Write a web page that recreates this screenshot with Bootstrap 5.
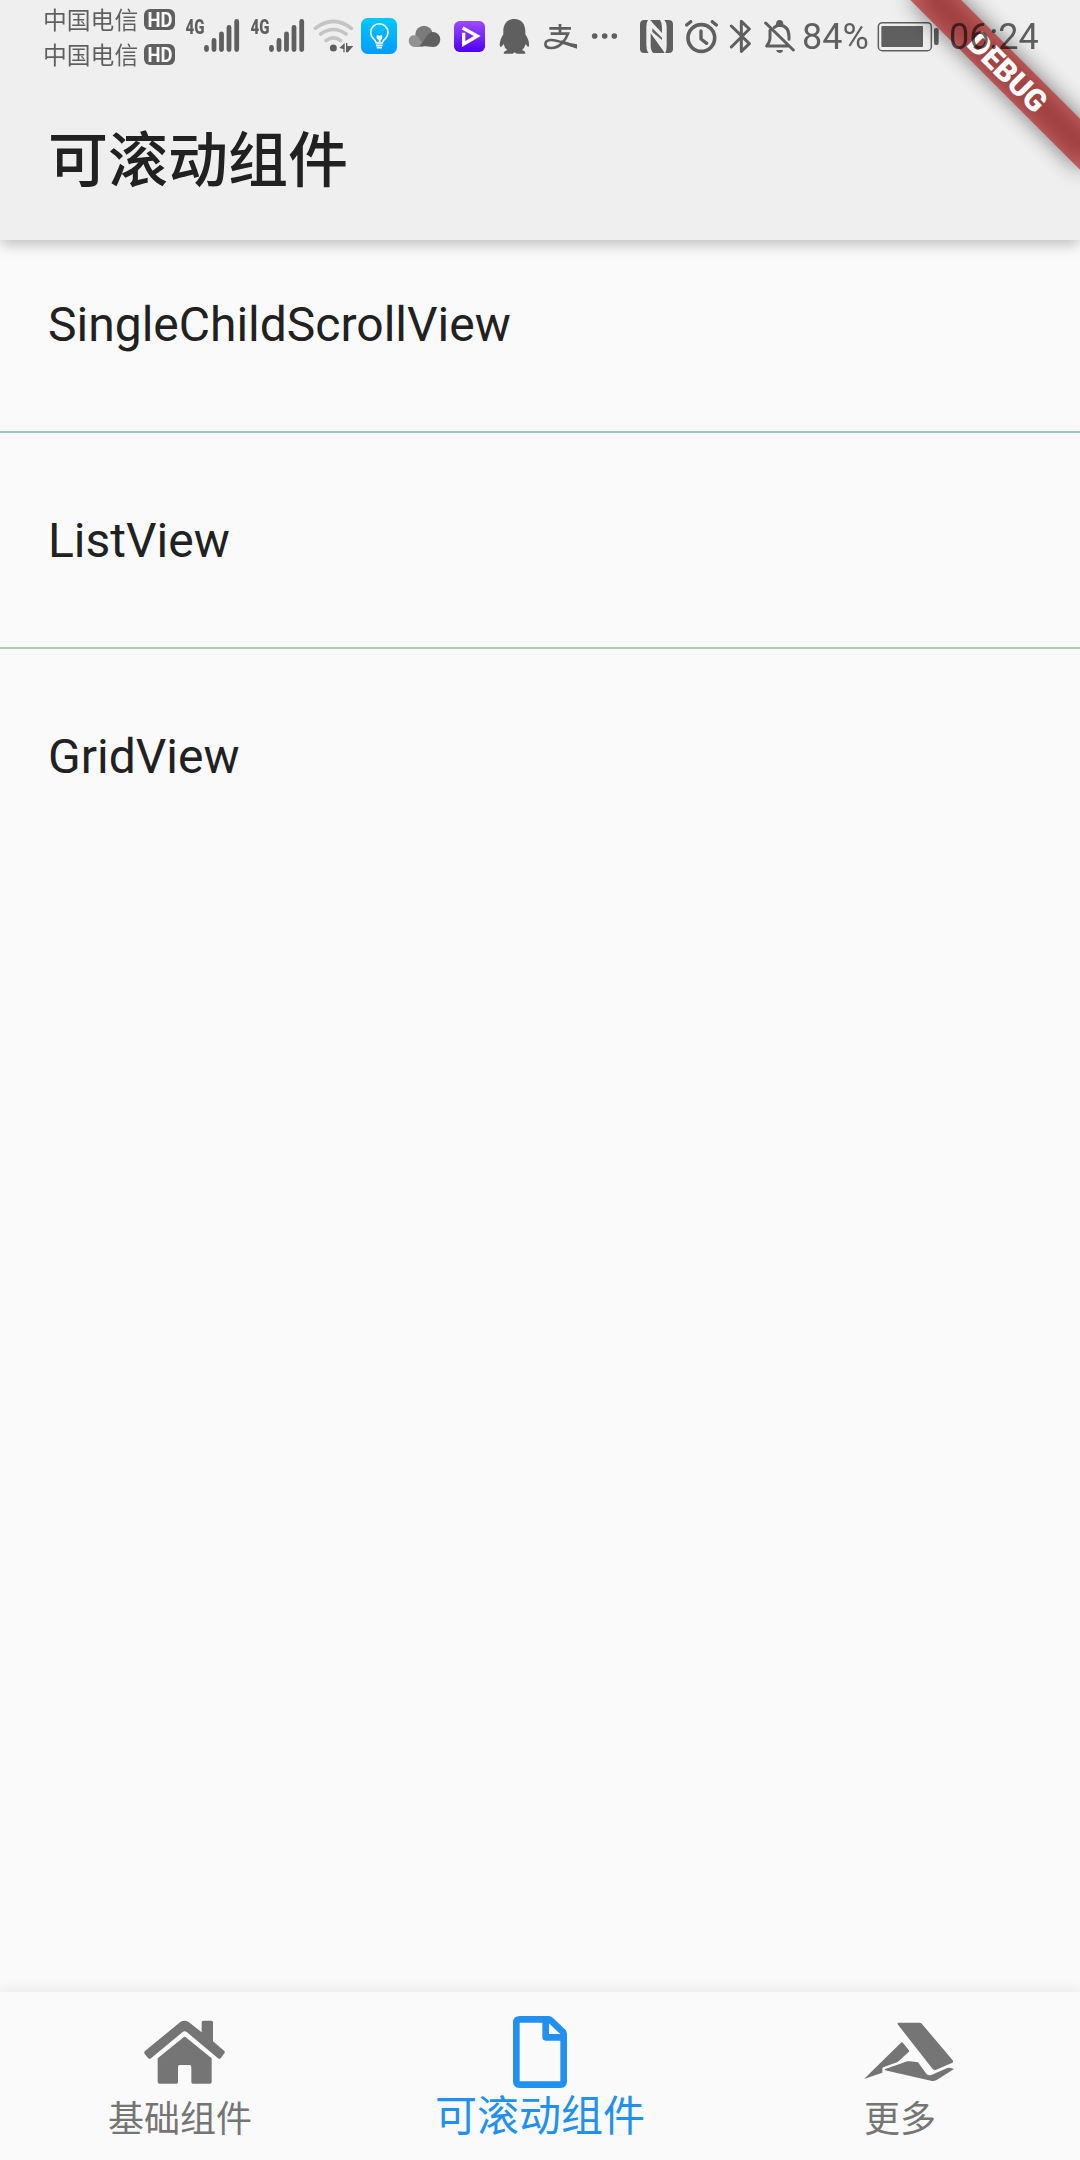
<!DOCTYPE html>
<html lang="zh-CN">
<head>
<meta charset="utf-8">
<meta name="viewport" content="width=device-width, initial-scale=1">
<title>可滚动组件</title>
<link href="https://cdn.jsdelivr.net/npm/bootstrap@5.3.0/dist/css/bootstrap.min.css" rel="stylesheet">
<style>
body { font-family: Roboto, "Noto Sans CJK SC", sans-serif; background: #fafafa; color: #212121; }
.app-screen { height: 2160px; }
.app-header { height: 240px; background: #efefef; box-shadow: 0 6px 12px -3px rgba(0,0,0,.14), 0 9px 15px rgba(0,0,0,.05), 0 3px 15px rgba(0,0,0,.08); z-index: 2; }
.debug-ribbon { width: 240px; height: 240px; }
.status-strip { height: 72px; padding-left: 43px; }
.status-strip svg { flex: none; height: 72px; }
.ink { opacity: .6; }
.carriers { width: 101px; height: 72px; font-size: 23.8px; color: #000; }
.carriers div { height: 35px; line-height: 35px; }
.status-num { font-size: 36px; line-height: 74px; color: #000; }
.pct { width: 75px; }
.app-title { font-size: 60px; font-weight: 500; height: 168px; line-height: 180px; padding-left: 48px; }
.tile { height: 168px; line-height: 170px; font-size: 48px; padding: 0 48px; }
.rule { height: 2px; margin: 23px 0; }
.rule-blue { background: #9bc4dc; }
.rule-green { background: #accdb0; }
.tab-strip { height: 168px; box-shadow: 0 -3px 12px rgba(0,0,0,.07); background: #fafafa; }
.tab-item { padding-top: 18px; color: #757575; font-size: 36px; text-decoration: none; }
.tab-item svg { width: 120px; height: 90px; }
.tab-item span { line-height: 40px; white-space: nowrap; }
.tab-item.current { color: #2190f0; font-size: 42px; }
.tab-item.current span { line-height: 34px; }
</style>
<script src="https://cdn.jsdelivr.net/npm/bootstrap@5.3.0/dist/js/bootstrap.bundle.min.js"></script>
</head>
<body>
<div class="app-screen d-flex flex-column overflow-hidden">
  <header class="app-header position-relative flex-shrink-0">
    <svg class="debug-ribbon position-absolute top-0 end-0" viewBox="-240 0 240 240">
      <defs><filter id="soft" x="-50%" y="-200%" width="200%" height="500%"><feGaussianBlur stdDeviation="11"/></filter></defs>
      <g transform="rotate(45)">
        <rect x="-120" y="84" width="240" height="36" fill="#000" fill-opacity=".5" filter="url(#soft)"/>
        <rect x="-120" y="84" width="240" height="36" fill="#b71c1c" fill-opacity=".627"/>
        <text x="0" y="113" text-anchor="middle" font-size="30.6" font-weight="900" fill="#fff">DEBUG</text>
      </g>
    </svg>
    <div class="status-strip d-flex position-relative">
      <div class="carriers ink flex-shrink-0"><div class="mt-1">中国电信</div><div>中国电信</div></div>
      <svg class="ink" width="36" viewBox="144 0 36 72">
        <rect x="144" y="9" width="31" height="21" rx="6"/><rect x="144" y="44" width="31" height="21" rx="6"/>
        <g fill="#fff" font-size="20" font-weight="700"><text x="147.500" y="26.700" textLength="25" lengthAdjust="spacingAndGlyphs">HD</text><text x="147.500" y="61.700" textLength="25" lengthAdjust="spacingAndGlyphs">HD</text></g>
      </svg>
      <svg class="ink" width="65" viewBox="180 0 65 72">
        <text x="185.500" y="33.700" font-size="21" font-weight="900" textLength="19" lengthAdjust="spacingAndGlyphs">4G</text>
        <path stroke="#000" stroke-width="4.800" stroke-linecap="round" d="M206.500 47.500v2M214 40.500v9M221.500 34v15.500M229 27.500v22M236.700 21.500v28"/>
      </svg>
      <svg class="ink" width="65" viewBox="180 0 65 72">
        <text x="185.500" y="33.700" font-size="21" font-weight="900" textLength="19" lengthAdjust="spacingAndGlyphs">4G</text>
        <path stroke="#000" stroke-width="4.800" stroke-linecap="round" d="M206.500 47.500v2M214 40.500v9M221.500 34v15.500M229 27.500v22M236.700 21.500v28"/>
      </svg>
      <svg width="48" viewBox="30 0 144 216">
        <g fill="none" stroke="#c4c4c4" stroke-width="11" stroke-linecap="round"><path d="M46 85Q100 43 154 85"/><path d="M62 102Q100 75 138 102"/><path d="M78 122Q100 105 122 122"/></g>
        <g fill="#606060"><circle cx="100" cy="144" r="10.500"/><path d="M118 144L134 129V157H130V147ZM138 129H142V138H160L144 157H138Z"/></g>
      </svg>
      <svg width="46" viewBox="174 0 138 216">
        <defs><linearGradient id="sky" x2="0" y2="1"><stop stop-color="#00c8ff"/><stop offset="1" stop-color="#009cff"/></linearGradient><linearGradient id="violet" x2="0" y2="1"><stop stop-color="#9a4cff"/><stop offset="1" stop-color="#5000f5"/></linearGradient></defs>
        <rect x="183" y="54" width="108" height="108" rx="20" fill="url(#sky)"/>
        <path d="M229 129Q227 121 220 116A26 26 0 1 1 256 116Q249 121 247 129ZM228 136h20M230 143h16" fill="none" stroke="#fff" stroke-width="5"/>
        <path d="M236 127V120A9 9 0 0 1 232 105Q238 109 244 105A9 9 0 0 1 242 120V127Z" fill="#fff"/>
      </svg>
      <svg width="44" viewBox="312 0 132 216">
        <circle cx="372" cy="103" r="26" fill="#7b7b7b"/><path d="M340 106Q352 104 359 118Q365 130 371 141H345Q327 140 326 123Q327 108 340 106Z" fill="#929292"/>
        <path d="M358 137Q370 125 377 113Q386 96 400 96Q420 99 421 119Q418 139 400 141Z" fill="#606060"/>
      </svg>
      <svg width="45" viewBox="444 0 135 216">
        <rect x="462" y="63" width="93" height="93" rx="17" fill="url(#violet)"/>
        <path d="M491 98V132L532 108L488 84" fill="none" stroke="#fff" stroke-width="10"/>
      </svg>
      <svg class="ink" width="46" viewBox="579 0 138 216">
        <path d="M643 57C620 57 610 73 610 94V103Q599 120 599 136Q602 147 611 132Q613 144 622 150Q611 154 611 161H638L644 157L650 161H676Q677 154 666 150Q674 144 677 132Q686 147 687 136Q688 121 676 103V94C676 73 665 57 643 57Z"/>
      </svg>
      <svg class="ink" width="44" viewBox="717 0 132 216">
        <path d="M748 85H813M780 72V101M752 101H804C798 119 779 145 752 144C730 143 732 121 752 120C772 119 795 132 831 140" fill="none" stroke="#000" stroke-width="8"/><path d="M784 121Q810 130 831 133V146Q809 140 784 127Z"/>
      </svg>
      <svg class="ink" width="54" viewBox="849 0 162 216"><circle cx="884" cy="108" r="8.500"/><circle cx="914" cy="108" r="8.500"/><circle cx="943" cy="108" r="8.500"/></svg>
      <svg class="ink" width="43" viewBox="51 0 129 216">
        <path d="M73 60H84Q79 67 79 82V135Q79 150 85 159H73Q60 159 60 146V73Q60 60 73 60ZM146 60Q159 60 159 73V146Q159 159 146 159H136Q140 150 140 137V80Q140 67 133 60Z"/>
        <path d="M90 60H120Q126 68 126 82V99L98 69Q94 62 90 60ZM97 85L126 113V120L97 96ZM92 100L134 158L130 159H100Q92 152 92 138Z"/>
      </svg>
      <svg class="ink" width="45" viewBox="180 0 135 216">
        <circle cx="244" cy="114" r="40" fill="none" stroke="#000" stroke-width="11"/>
        <path d="M243 93V117L260 130M200 75L212 65M277 65L289 75" fill="none" stroke="#000" stroke-width="10" stroke-linecap="round" stroke-linejoin="round"/>
      </svg>
      <svg class="ink" width="34" viewBox="315 0 102 216"><path d="M334 78L388 131L364 154V64L388 87L334 141" fill="none" stroke="#000" stroke-width="9" stroke-linecap="round" stroke-linejoin="round"/></svg>
      <svg class="ink" width="43" viewBox="417 0 129 216">
        <path d="M437 69L520 150M450 91V114Q450 124 440 138H503M463 82Q470 76 479 76Q507 78 507 110V118" fill="none" stroke="#000" stroke-width="9" stroke-linecap="round" stroke-linejoin="round"/>
        <path d="M468 76Q467 60 479 60Q491 60 490 76ZM468 150H489Q488 159 479 159Q470 158 468 150Z"/>
      </svg>
      <div class="status-num pct ink flex-shrink-0">84%</div>
      <svg class="ink" width="72" viewBox="51 0 216 216">
        <rect x="55" y="68" width="159" height="84" rx="12" fill="none" stroke="#000" stroke-width="4.500"/><rect x="64" y="78" width="125" height="63" rx="3"/><rect x="222" y="84" width="14" height="51" rx="6"/>
      </svg>
      <div class="status-num ink">06:24</div>
    </div>
    <h1 class="app-title m-0">可滚动组件</h1>
  </header>
  <main class="flex-grow-1">
    <div class="tile">SingleChildScrollView</div>
    <div class="rule rule-blue"></div>
    <div class="tile">ListView</div>
    <div class="rule rule-green"></div>
    <div class="tile">GridView</div>
  </main>
  <nav class="tab-strip row g-0 flex-shrink-0">
    <a class="tab-item col d-flex flex-column align-items-center" href="#">
      <svg viewBox="90 90 360 270" fill="currentColor"><path d="M271 126Q283 118 296 126L335 157V127Q335 122 340 122H364Q369 122 369 127V184L403 213Q406 217 403 220L392 235Q388 238 384 235L291 157Q284 151 277 157L183 235Q179 238 175 235L164 222Q161 217 165 213Z"/><path d="M279 173Q284 168 289 173L365 235V306Q365 311 360 311H309Q304 311 304 306V261Q304 255 299 255H269Q264 255 264 261V306Q264 311 259 311H209Q203 311 203 306V235Z"/></svg>
      <span>基础组件</span>
    </a>
    <a class="tab-item current col d-flex flex-column align-items-center" href="#" aria-current="page">
      <svg viewBox="180 90 360 270" fill="none" stroke="currentColor" stroke-width="20" stroke-linejoin="round"><path d="M299 118H386Q389 118 392 121L428 155Q431 158 431 163V304Q431 314 421 314H299Q289 314 289 304V128Q289 118 299 118Z"/><path d="M377 122V172H428"/></svg>
      <span>可滚动组件</span>
    </a>
    <a class="tab-item col d-flex flex-column align-items-center" href="#">
      <svg viewBox="0 90 360 270" fill="currentColor"><path d="M176 128H239Q243 128 246 132L338 241Q341 245 337 248L287 270Q282 271 278 267L173 133Q171 129 176 128ZM72 297L182 189Q186 185 189 189L206 210Q209 213 205 217L173 246L130 262Q127 263 127 267V278ZM134 268L202 244Q206 243 210 244L234 247L259 281Q265 288 274 285L322 264Q326 262 342 267L290 300Q283 304 276 303L135 271Z"/></svg>
      <span>更多</span>
    </a>
  </nav>
</div>
</body>
</html>
